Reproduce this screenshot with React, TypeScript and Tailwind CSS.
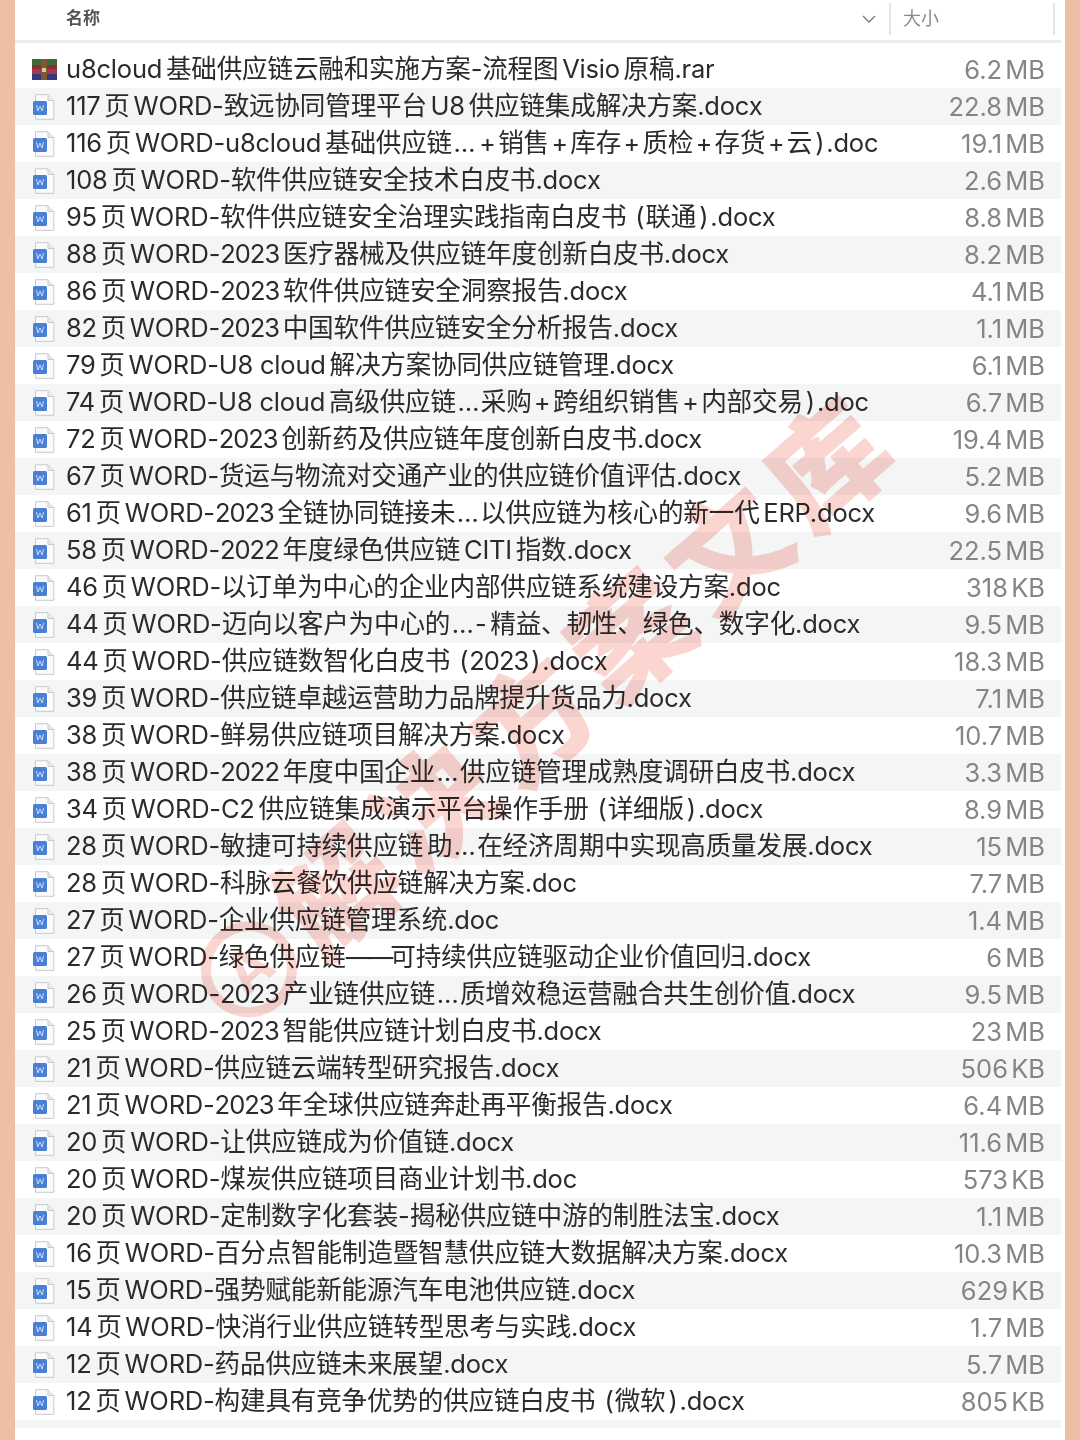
const rows: [string, string][] = [
  ["u8cloud 基础供应链云融和实施方案-流程图 Visio 原稿.rar", "6.2 MB"],
  ["117 页 WORD-致远协同管理平台 U8 供应链集成解决方案.docx", "22.8 MB"],
  ["116 页 WORD-u8cloud 基础供应链…+销售+库存+质检+存货+云）.doc", "19.1 MB"],
  ["108 页 WORD-软件供应链安全技术白皮书.docx", "2.6 MB"],
  ["95 页 WORD-软件供应链安全治理实践指南白皮书（联通）.docx", "8.8 MB"],
  ["88 页 WORD-2023 医疗器械及供应链年度创新白皮书.docx", "8.2 MB"],
  ["86 页 WORD-2023 软件供应链安全洞察报告.docx", "4.1 MB"],
  ["82 页 WORD-2023 中国软件供应链安全分析报告.docx", "1.1 MB"],
  ["79 页 WORD-U8 cloud 解决方案协同供应链管理.docx", "6.1 MB"],
  ["74 页 WORD-U8 cloud 高级供应链…采购+跨组织销售+内部交易）.doc", "6.7 MB"],
  ["72 页 WORD-2023 创新药及供应链年度创新白皮书.docx", "19.4 MB"],
  ["67 页 WORD-货运与物流对交通产业的供应链价值评估.docx", "5.2 MB"],
  ["61 页 WORD-2023 全链协同链接未…以供应链为核心的新一代 ERP.docx", "9.6 MB"],
  ["58 页 WORD-2022 年度绿色供应链 CITI 指数.docx", "22.5 MB"],
  ["46 页 WORD-以订单为中心的企业内部供应链系统建设方案.doc", "318 KB"],
  ["44 页 WORD-迈向以客户为中心的…- 精益、韧性、绿色、数字化.docx", "9.5 MB"],
  ["44 页 WORD-供应链数智化白皮书（2023）.docx", "18.3 MB"],
  ["39 页 WORD-供应链卓越运营助力品牌提升货品力.docx", "7.1 MB"],
  ["38 页 WORD-鲜易供应链项目解决方案.docx", "10.7 MB"],
  ["38 页 WORD-2022 年度中国企业…供应链管理成熟度调研白皮书.docx", "3.3 MB"],
  ["34 页 WORD-C2 供应链集成演示平台操作手册（详细版）.docx", "8.9 MB"],
  ["28 页 WORD-敏捷可持续供应链 助…在经济周期中实现高质量发展.docx", "15 MB"],
  ["28 页 WORD-科脉云餐饮供应链解决方案.doc", "7.7 MB"],
  ["27 页 WORD-企业供应链管理系统.doc", "1.4 MB"],
  ["27 页 WORD-绿色供应链——可持续供应链驱动企业价值回归.docx", "6 MB"],
  ["26 页 WORD-2023 产业链供应链…质增效稳运营融合共生创价值.docx", "9.5 MB"],
  ["25 页 WORD-2023 智能供应链计划白皮书.docx", "23 MB"],
  ["21 页 WORD-供应链云端转型研究报告.docx", "506 KB"],
  ["21 页 WORD-2023 年全球供应链奔赴再平衡报告.docx", "6.4 MB"],
  ["20 页 WORD-让供应链成为价值链.docx", "11.6 MB"],
  ["20 页 WORD-煤炭供应链项目商业计划书.doc", "573 KB"],
  ["20 页 WORD-定制数字化套装-揭秘供应链中游的制胜法宝.docx", "1.1 MB"],
  ["16 页 WORD-百分点智能制造暨智慧供应链大数据解决方案.docx", "10.3 MB"],
  ["15 页 WORD-强势赋能新能源汽车电池供应链.docx", "629 KB"],
  ["14 页 WORD-快消行业供应链转型思考与实践.docx", "1.7 MB"],
  ["12 页 WORD-药品供应链未来展望.docx", "5.7 MB"],
  ["12 页 WORD-构建具有竞争优势的供应链白皮书（微软）.docx", "805 KB"],
];

// CJK glyphs, years, pluses and brackets each get their own width to follow the reference's spacing
const FileName = ({ text }: { text: string }) => {
  const parts = text
    .split(/( (?=[\u4e00-\u9fff])|(?<=[\u4e00-\u9fff]) |[\u4e00-\u9fff、]+|——|\d{4}|\+|…|（|）)/)
    .filter(Boolean);
  return (
    <>
      {parts.map((p, i) => {
        if (p === " ") return <span key={i} className="text-[14px]">{" "}</span>;
        if (/^\d{4}$/.test(p)) return <span key={i} className="tracking-[-1px]">{p}</span>;
        if (p === "——") return <span key={i} className="text-[25.3px] tracking-[-3px]">{p}</span>;
        if (p === "+") return <span key={i} className="mx-[2.5px] text-[25px]">+</span>;
        if (p === "…") return <span key={i} className="mx-[1.5px]">…</span>;
        if (p === "（") return <span key={i} className="ml-[9px] mr-[1px]">(</span>;
        if (p === "）") return <span key={i} className="ml-[3px] mr-[2px]">)</span>;
        if (/^[\u4e00-\u9fff、]+$/.test(p)) return <span key={i} className="text-[25.6px]">{p}</span>;
        return <span key={i}>{p}</span>;
      })}
    </>
  );
};

const RarIcon = () => (
  <svg width="25" height="21" viewBox="0 0 25 21" className="-ml-[1px] shrink-0">
    <rect x="0" y="0" width="25" height="6" fill="#3f6b3a" />
    <rect x="0" y="6" width="25" height="4" fill="#8a2f3a" />
    <rect x="0" y="10" width="25" height="5" fill="#a33a48" />
    <rect x="0" y="15" width="25" height="6" fill="#34377e" />
    <rect x="9" y="0" width="6" height="21" fill="#7a5a32" />
    <rect x="10" y="9" width="4" height="4" fill="#d9c9a0" />
  </svg>
);

const WordIcon = () => (
  <svg width="22" height="26" viewBox="0 0 22 26" className="shrink-0">
    <path d="M2.5 .7H15L20.8 6.5V25.3H2.5Z" fill="#fbfbfc" stroke="#c9cacd" strokeWidth="1" />
    <path d="M15 .7V6.5H20.8" fill="#e9eaec" stroke="#c9cacd" strokeWidth="1" />
    <rect x="0" y="7" width="14" height="14" rx="1.5" fill="#4a7fd6" />
    <path d="M3.5 11l1.4 6 2.1-5 2.1 5 1.4-6" fill="none" stroke="#c7d9f6" strokeWidth="1" />
  </svg>
);

export default function App() {
  return (
    <div className="relative h-[1440px] w-[1080px] overflow-hidden bg-[#edbfa3] px-[15px] font-['Inter','Noto_Sans_CJK_SC',sans-serif]">
      <div className="h-full w-[1050px] bg-white pr-[4px]">
        <div className="flex h-[43px] items-center border-b-[3px] border-[#ececec] pb-[3px]">
          <span className="ml-[51px] flex-1 text-[17px] font-semibold text-[#555555]">名称</span>
          <svg width="14" height="8" viewBox="0 0 14 8" className="mr-[13px]">
            <path d="M1 1l6 6 6-6" fill="none" stroke="#777777" strokeWidth="1.3" />
          </svg>
          <div className="h-[32px] w-[2px] bg-[#e6e6e6]" />
          <span className="ml-[12px] w-[150px] text-[18px] text-[#8a8a8a]">大小</span>
          <div className="mr-[6px] h-[32px] w-[2px] bg-[#e6e6e6]" />
        </div>
        <div className="pt-[8px]">
          {rows.map(([name, size], i) => (
            <div
              key={i}
              className={`flex h-[37px] items-center pl-[18px] pr-[16px] ${i % 2 === 1 ? "bg-[#f4f5f5]" : ""}`}
            >
              <div className="flex w-[33px] justify-start">{i === 0 ? <RarIcon /> : <WordIcon />}</div>
              <span className="flex-1 whitespace-nowrap pt-[2px] text-[25.5px] leading-[37px] tracking-[-0.2px] text-[#2b2b2b]">
                <FileName text={name} />
              </span>
              <span className="whitespace-nowrap text-[25.5px] leading-[37px] text-[#858585] [word-spacing:-4px]">
                {size}
              </span>
            </div>
          ))}
          <div className="h-[8px] bg-[#f4f5f5]" />
        </div>
      </div>
      <div className="pointer-events-none absolute left-[47px] top-[650px] flex h-[120px] w-[1000px] -rotate-[41deg] items-center justify-center gap-[10px] whitespace-nowrap text-[#fbd5d0] mix-blend-multiply">
        <span className="flex h-[96px] w-[96px] shrink-0 items-center justify-center rounded-full border-[10px] border-[#fbd5d0] text-[56px] font-bold">
          A
        </span>
        <span className="text-[118px] font-black leading-none tracking-[12px]">解决方案文库</span>
      </div>
    </div>
  );
}
